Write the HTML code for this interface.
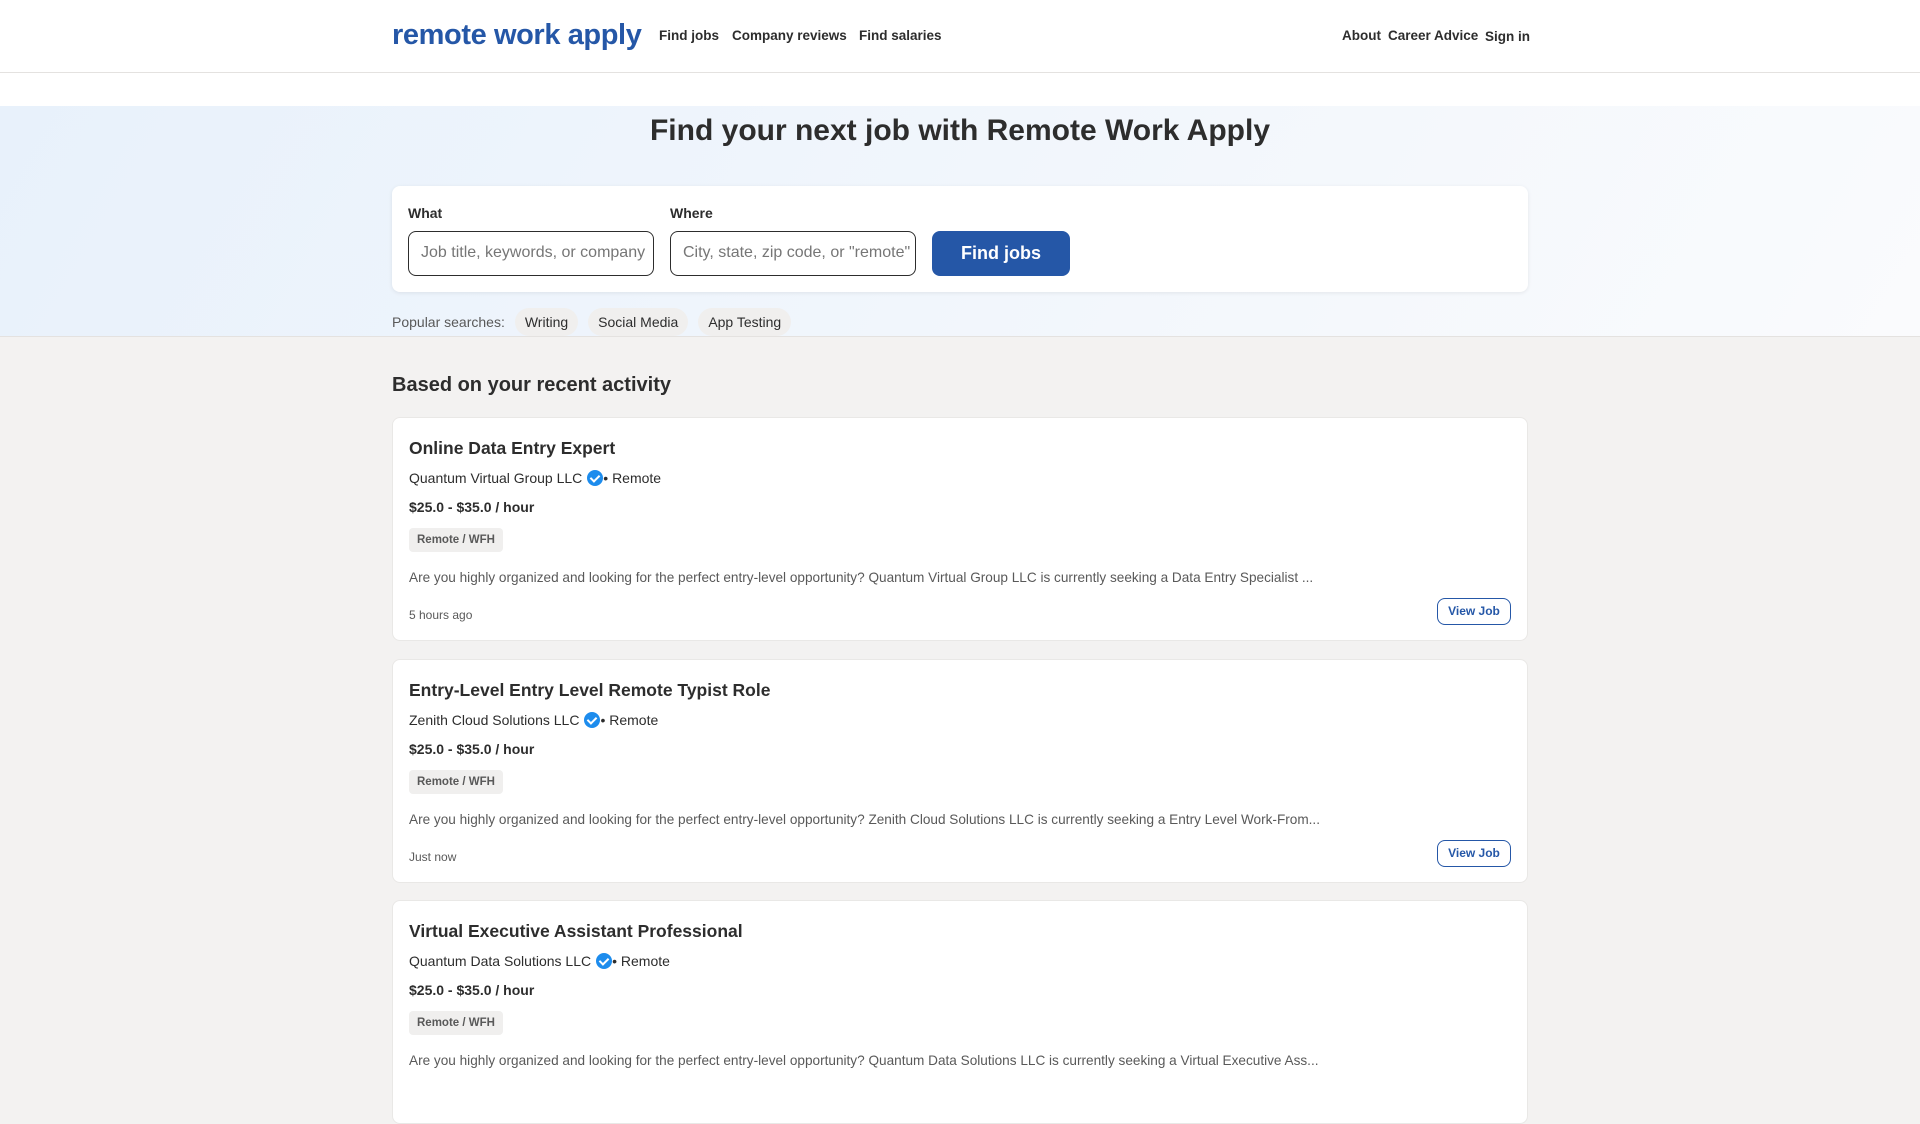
<!DOCTYPE html>
<html><head><style>
*{box-sizing:border-box;margin:0;padding:0}
body{width:1920px;height:1080px;overflow:hidden;background:#f3f2f1;font-family:"Liberation Sans",sans-serif;color:#2d2d2d;position:relative}
.hdr{position:absolute;left:0;top:0;width:1920px;height:73px;background:#fff;border-bottom:1px solid #e4e2e0}
.logo{position:absolute;left:392px;top:19px;font-size:29px;font-weight:bold;color:#2557a7;letter-spacing:-0.4px}
.nav{position:absolute;top:28px;font-size:13.5px;font-weight:bold;color:#2d2d2d}
.gap{position:absolute;top:73px;left:0;width:1920px;height:33px;background:#fff}
.hero{position:absolute;top:106px;left:0;width:1920px;height:231px;background:linear-gradient(120deg,#e8f1fb 0%,#f1f6fc 50%,#fafbfd 100%);border-bottom:1px solid #e4e2e0}
h1{position:absolute;top:114px;left:0;width:1920px;text-align:center;font-size:30px;font-weight:bold;color:#2d2d2d}
.card0{position:absolute;left:392px;top:186px;width:1136px;height:106px;background:#fff;border-radius:8px;box-shadow:0 1px 4px rgba(0,0,0,.08)}
.lbl{position:absolute;top:19px;font-size:14px;font-weight:bold}
.inp{position:absolute;top:45px;height:45px;border:1px solid #2d2d2d;border-radius:8px;font-size:16px;color:#767676;padding:12px 12px;white-space:nowrap;overflow:hidden}
.btn{position:absolute;left:540px;top:45px;width:138px;height:45px;background:#2557a7;border-radius:8px;color:#fff;font-size:18px;font-weight:bold;text-align:center;line-height:45px}
.pop{position:absolute;top:308px;left:392px;font-size:14px;color:#595959;display:flex;align-items:center}
.chip{background:#f0efee;border-radius:14px;padding:6px 10px;margin-left:10px;color:#2d2d2d;font-weight:500}
h2{position:absolute;top:374px;left:392px;font-size:20px;font-weight:bold}
.job{position:absolute;left:392px;width:1136px;height:224px;background:#fff;border:1px solid #e9e8e6;border-radius:8px}
.t{position:absolute;left:16px;top:20px;font-size:17.5px;font-weight:bold}
.co{position:absolute;left:16px;top:52px;font-size:14px;display:flex;align-items:center}
.chk{display:inline-block;width:16px;height:16px;border-radius:50%;background:#1d8ced;margin-left:5px;position:relative}
.chk:after{content:"";position:absolute;left:5px;top:3px;width:4px;height:7px;border:solid #fff;border-width:0 2px 2px 0;transform:rotate(45deg)}
.sal{position:absolute;left:16px;top:81px;font-size:14px;font-weight:bold}
.tag{position:absolute;left:16px;top:110px;background:#f0efee;border-radius:4px;font-size:11.5px;font-weight:bold;color:#595959;padding:6px 8px}
.d{position:absolute;left:16px;top:152px;font-size:13.6px;color:#595959;white-space:nowrap}
.tm{position:absolute;left:16px;top:190px;font-size:12px;color:#595959}
.vj{position:absolute;right:16px;top:180px;width:74px;height:27px;border:1px solid #2557a7;border-radius:8px;color:#2557a7;font-size:12px;font-weight:bold;text-align:center;line-height:25px}
</style></head><body>
<div class="hdr">
<div class="logo">remote work apply</div>
<div class="nav" style="left:659px">Find jobs</div>
<div class="nav" style="left:732px">Company reviews</div>
<div class="nav" style="left:859px">Find salaries</div>
<div class="nav" style="left:1342px">About</div>
<div class="nav" style="left:1388px">Career Advice</div>
<div class="nav" style="left:1485px;top:29px">Sign in</div>
</div>
<div class="gap"></div>
<div class="hero"></div>
<h1>Find your next job with Remote Work Apply</h1>
<div class="card0">
<div class="lbl" style="left:16px">What</div>
<div class="lbl" style="left:278px">Where</div>
<div class="inp" style="left:16px;width:246px">Job title, keywords, or company</div>
<div class="inp" style="left:278px;width:246px">City, state, zip code, or "remote"</div>
<div class="btn">Find jobs</div>
</div>
<div class="pop">Popular searches:<span class="chip">Writing</span><span class="chip">Social Media</span><span class="chip">App Testing</span></div>
<h2>Based on your recent activity</h2>

<div class="job" style="top:417px">
<div class="t">Online Data Entry Expert</div>
<div class="co">Quantum Virtual Group LLC <span class="chk"></span>• Remote</div>
<div class="sal">$25.0 - $35.0 / hour</div>
<div class="tag">Remote / WFH</div>
<div class="d">Are you highly organized and looking for the perfect entry-level opportunity? Quantum Virtual Group LLC is currently seeking a Data Entry Specialist ...</div>
<div class="tm">5 hours ago</div>
<div class="vj">View Job</div>
</div>
<div class="job" style="top:659px">
<div class="t">Entry-Level Entry Level Remote Typist Role</div>
<div class="co">Zenith Cloud Solutions LLC <span class="chk"></span>• Remote</div>
<div class="sal">$25.0 - $35.0 / hour</div>
<div class="tag">Remote / WFH</div>
<div class="d">Are you highly organized and looking for the perfect entry-level opportunity? Zenith Cloud Solutions LLC is currently seeking a Entry Level Work-From...</div>
<div class="tm">Just now</div>
<div class="vj">View Job</div>
</div>
<div class="job" style="top:900px">
<div class="t">Virtual Executive Assistant Professional</div>
<div class="co">Quantum Data Solutions LLC <span class="chk"></span>• Remote</div>
<div class="sal">$25.0 - $35.0 / hour</div>
<div class="tag">Remote / WFH</div>
<div class="d">Are you highly organized and looking for the perfect entry-level opportunity? Quantum Data Solutions LLC is currently seeking a Virtual Executive Ass...</div>
</div>
</body></html>
